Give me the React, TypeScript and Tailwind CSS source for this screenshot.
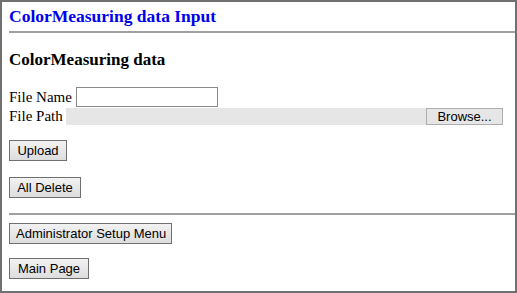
import React from 'react'

const btn =
  'h-[21px] whitespace-nowrap border border-[#707070] bg-gradient-to-b from-[#f2f2f2] to-[#dddddd] px-[6px] font-["Liberation_Sans",Arial,sans-serif] text-[13px] leading-none text-black'

export default function App() {
  return (
    <div className="h-[293px] w-[517px] overflow-hidden border-2 border-[#707070] bg-white font-['Liberation_Serif','Times_New_Roman',serif] text-black">
      <div className="px-[7px]">
        <h1 className="pt-[3px] text-[17.5px] font-bold leading-[22px] text-[#0000ee]">ColorMeasuring data Input</h1>
        <hr className="mr-[-7px] mt-[4px] border-t-2 border-[#a0a0a0]" />
        <h3 className="mt-[17px] text-[17px] font-bold leading-[20px]">ColorMeasuring data</h3>

        <div className="mt-[17px] flex h-[20px] items-center text-[15px] leading-[19px]">
          <span className="mr-[4px]">File Name</span>
          <input type="text" className="h-[20px] w-[142px] border border-[#8a8a8a] bg-white" />
        </div>
        <div className="flex h-[19px] items-center text-[15px] leading-[19px]">
          <span className="mr-[3px]">File Path</span>
          <div className="flex h-[17px] flex-1 items-stretch bg-[#e6e6e6]">
            <div className="flex-1" />
            <div className="flex w-[77px] items-center justify-center border border-[#adadad] bg-[#e6e6e6] font-['Liberation_Sans',Arial,sans-serif] text-[13px] text-black">
              Browse...
            </div>
          </div>
          <div className="w-[5px]" />
        </div>

        <div className="mt-[14px] flex">
          <button className={`${btn} w-[58px]`}>Upload</button>
        </div>
        <div className="mt-[16px] flex">
          <button className={`${btn} w-[72px]`}>All Delete</button>
        </div>

        <hr className="mr-[-7px] mt-[15px] border-t-2 border-[#a0a0a0]" />

        <div className="mt-[8px] flex">
          <button className={`${btn} w-[163px]`}>Administrator Setup Menu</button>
        </div>
        <div className="mt-[14px] flex">
          <button className={`${btn} w-[80px]`}>Main Page</button>
        </div>
      </div>
    </div>
  )
}
